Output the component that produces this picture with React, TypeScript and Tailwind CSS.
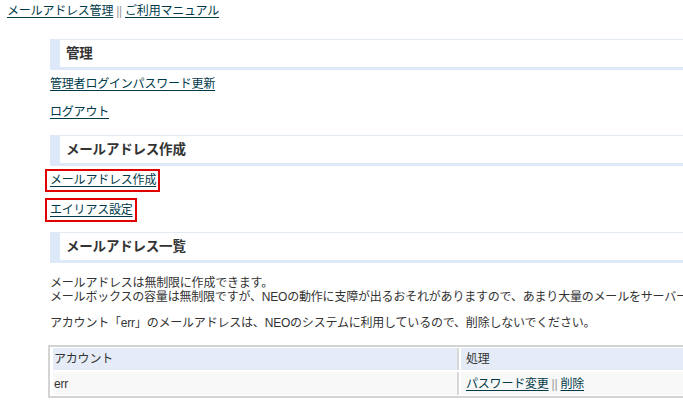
import React from 'react';

const FONT = { fontFamily: '"Liberation Sans", "Noto Sans CJK JP", sans-serif' };

const linkCls = 'text-[#003a4a] underline underline-offset-2';

const Heading = ({ title, className = '' }: { title: string; className?: string }) => (
  <div className={`h-[31px] flex items-center border-t border-t-[#e3eaf1] border-l-[10px] border-l-[#dde9f8] border-b-[3px] border-b-[#dde9f8] pl-[6px] text-[13.5px] font-bold text-[#333] ${className}`}>
    {title}
  </div>
);

const Sep = () => <span className="text-[#999] mx-[3px]">||</span>;

export default function App() {
  return (
    <div className="w-[683px] h-[418px] overflow-hidden bg-white text-[12px] leading-[14px] text-[#333] tracking-[-0.2px]" style={FONT}>
      <div className="w-[1000px]">
        <div className="pl-[7px] pt-[4px]">
          <a className={linkCls} href="#">メールアドレス管理</a>
          <Sep />
          <a className={linkCls} href="#">ご利用マニュアル</a>
        </div>

        <div className="pl-[50px]">
          <Heading title="管理" className="mt-[21px]" />
          <div className="h-[28px] flex items-center">
            <a className={linkCls} href="#">管理者ログインパスワード更新</a>
          </div>
          <div className="h-[28px] flex items-center">
            <a className={linkCls} href="#">ログアウト</a>
          </div>

          <Heading title="メールアドレス作成" className="mt-[9px]" />
          <div className="h-[28px] flex items-center">
            <span className="-ml-[5px] h-[23px] inline-flex items-center border-2 border-[#e00000] pl-[3px] pr-[2px]">
              <a className={linkCls} href="#">メールアドレス作成</a>
            </span>
          </div>
          <div className="h-[28px] flex items-end">
            <span className="-ml-[5px] h-[24px] inline-flex items-center border-2 border-[#e00000] pl-[3px] pr-[2px]">
              <a className={linkCls} href="#">エイリアス設定</a>
            </span>
          </div>

          <Heading title="メールアドレス一覧" className="mt-[10px]" />

          <p className="mt-[13px]">
            メールアドレスは無制限に作成できます。
            <br />
            メールボックスの容量は無制限ですが、NEOの動作に支障が出るおそれがありますので、あまり大量のメールをサーバーに残さないようにしてください。
          </p>
          <p className="mt-[12px]">
            アカウント「err」のメールアドレスは、NEOのシステムに利用しているので、削除しないでください。
          </p>

          <div className="mt-[15px] -ml-[2px] w-[800px] border-2 border-[#d4d4d4] px-[3px] py-[1px]">
            <div className="grid grid-cols-[406px_1fr] gap-x-[2px] gap-y-[2px]">
              <div className="h-[22px] flex items-center bg-[#e5ecf7] border-r-2 border-r-[#d8d8d8] pl-[1px]">アカウント</div>
              <div className="h-[22px] flex items-center bg-[#e5ecf7] pl-[5px]">処理</div>
              <div className="h-[23px] flex items-center bg-[#f8f8f8] border-r-2 border-r-[#d8d8d8] pl-[1px]">err</div>
              <div className="h-[23px] flex items-center bg-[#f8f8f8] pl-[5px]">
                <a className={linkCls} href="#">パスワード変更</a>
                <Sep />
                <a className={linkCls} href="#">削除</a>
              </div>
            </div>
          </div>
        </div>
      </div>
    </div>
  );
}
